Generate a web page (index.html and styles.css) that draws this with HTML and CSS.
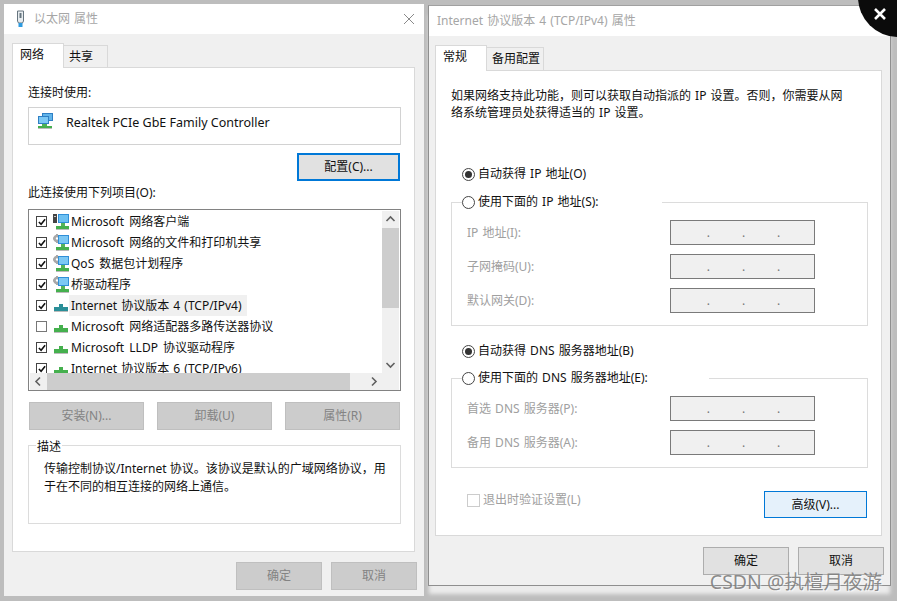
FILE: index.html
```html
<!DOCTYPE html>
<html lang="zh-CN">
  <head>
    <meta charset="UTF-8" />
    <title>以太网 属性</title>
    <link rel="stylesheet" href="styles.css">
  </head>
  <body>
    <svg class="defs" xmlns="http://www.w3.org/2000/svg">
      <symbol id="tick" viewBox="0 0 9 9">
        <path d="M1 4.500 3.500 7 8 1.500" fill="none" stroke="#111" stroke-width="1.800" />
      </symbol>
      <symbol id="client" viewBox="0 0 16 17">
        <path d="M0 1h4v9H0z" fill="#444" />
        <path d="M1 3h2v1H1z" fill="#ccc" />
        <path d="M5 1h11v9H5z" fill="#2f8fd8" />
        <path d="M6 2h9v7H6z" fill="#6cc0f2" />
        <path d="M8 10h4v3H8z" fill="#56b35a" />
        <path d="M3 13h13v3H3z" fill="#45b04e" />
        <path d="M3 16h13v1H3z" fill="#bbb" />
      </symbol>
      <symbol id="service" viewBox="0 0 16 17">
        <circle cx="4" cy="4.500" r="2.500" fill="none" stroke="#a8a8a8" stroke-width="2.600" />
        <path d="M3 0h2v2H3zM0 3.500h2v2H0zM3 7h2v2H3z" fill="#a8a8a8" />
        <path d="M5 1h11v9H5z" fill="#2f8fd8" />
        <path d="M6 2h9v7H6z" fill="#7cc8f4" />
        <path d="M8 10h4v3H8z" fill="#56b35a" />
        <path d="M3 13h13v3H3z" fill="#45b04e" />
        <path d="M3 16h13v1H3z" fill="#bbb" />
      </symbol>
      <symbol id="protocol" viewBox="0 0 14 8">
        <path d="M5 0h4v3H5z" fill="currentColor" />
        <path d="M0 3h14v4H0z" fill="currentColor" />
        <path d="M0 7h14v1H0z" fill="#bbb" />
      </symbol>
      <symbol id="adapter" viewBox="0 0 16 16">
        <path d="M5 0h11v8H5z" fill="#2f7fc4" />
        <path d="M6 1h9v6H6z" fill="#62b5ea" />
        <path d="M1 3h11v8H1z" fill="#2f7fc4" />
        <path d="M2 4h9v6H2z" fill="#7cc8f4" />
        <path d="M5 11h5v2H5z" fill="#4fb257" />
        <path d="M1 13h14v2H1z" fill="#45b04e" />
        <path d="M1 15h14v1H1z" fill="#bbb" />
      </symbol>
      <symbol id="plug" viewBox="0 0 9 18">
        <path d="M1.500 1h6v10l-1 2h-4l-1-2z" fill="#e8edf0" stroke="#66757f" />
        <path d="M3.500 3h2v5h-2z" fill="#66757f" />
        <path d="M2.500 13h4v4h-4z" fill="#2e9be0" />
      </symbol>
    </svg>

    <div class="desktop">
      <section class="window window-left">
        <header class="titlebar">
          <svg class="title-icon"><use href="#plug" /></svg>
          <span>以太网 属性</span>
          <svg class="title-close" viewBox="0 0 10 10">
            <path d="M0 0 10 10M10 0 0 10" stroke="#8a8a8a" fill="none" />
          </svg>
        </header>
        <div class="window-body">
          <div class="tabs">
            <span class="tab tab-active tab-wide">网络</span>
            <span class="tab tab-share">共享</span>
          </div>
          <div class="panel panel-left">
            <div class="text-line label-first">连接时使用:</div>
            <div class="adapter">
              <svg class="adapter-icon"><use href="#adapter" /></svg>
              <span class="adapter-name">Realtek PCIe GbE Family Controller</span>
            </div>
            <button class="btn btn-focus">配置(C)...</button>
            <div class="text-line label-items">此连接使用下列项目(O):</div>
            <div class="listbox">
              <ul class="list">
                <li class="row"><i class="check"><svg><use href="#tick" /></svg></i><svg class="row-icon"><use href="#client" /></svg><span class="row-text">Microsoft 网络客户端</span></li>
                <li class="row"><i class="check"><svg><use href="#tick" /></svg></i><svg class="row-icon"><use href="#service" /></svg><span class="row-text">Microsoft 网络的文件和打印机共享</span></li>
                <li class="row"><i class="check"><svg><use href="#tick" /></svg></i><svg class="row-icon"><use href="#service" /></svg><span class="row-text">QoS 数据包计划程序</span></li>
                <li class="row"><i class="check"><svg><use href="#tick" /></svg></i><svg class="row-icon"><use href="#service" /></svg><span class="row-text">桥驱动程序</span></li>
                <li class="row"><i class="check"><svg><use href="#tick" /></svg></i><svg class="row-icon proto teal"><use href="#protocol" /></svg><span class="row-text row-hover row-tight">Internet 协议版本 4 (TCP/IPv4)</span></li>
                <li class="row"><i class="check check-off"></i><svg class="row-icon proto"><use href="#protocol" /></svg><span class="row-text">Microsoft 网络适配器多路传送器协议</span></li>
                <li class="row"><i class="check"><svg><use href="#tick" /></svg></i><svg class="row-icon proto"><use href="#protocol" /></svg><span class="row-text">Microsoft LLDP 协议驱动程序</span></li>
                <li class="row"><i class="check"><svg><use href="#tick" /></svg></i><svg class="row-icon proto"><use href="#protocol" /></svg><span class="row-text row-tight">Internet 协议版本 6 (TCP/IPv6)</span></li>
              </ul>
              <div class="vbar">
                <svg class="arrow" viewBox="0 0 17 17"><path d="M4.500 10 8.500 6l4 4" /></svg>
                <div class="vtrack"><div class="vthumb"></div></div>
                <svg class="arrow" viewBox="0 0 17 17"><path d="M4.500 7 8.500 11l4-4" /></svg>
              </div>
              <div class="hbar">
                <svg class="arrow" viewBox="0 0 17 17"><path d="M10 4.500 6 8.500l4 4" /></svg>
                <div class="htrack"><div class="hthumb"></div></div>
                <svg class="arrow" viewBox="0 0 17 17"><path d="M7 4.500 11 8.500l-4 4" /></svg>
              </div>
              <div class="corner"></div>
            </div>
            <div class="action-row">
              <button class="btn btn-off">安装(N)...</button>
              <button class="btn btn-off">卸载(U)</button>
              <button class="btn btn-off">属性(R)</button>
            </div>
            <fieldset class="group group-desc">
              <legend class="desc-legend">描述</legend>
              <p class="desc-text">传输控制协议/Internet 协议。该协议是默认的广域网络协议，用<br>于在不同的相互连接的网络上通信。</p>
            </fieldset>
          </div>
          <div class="dialog-buttons">
            <button class="btn btn-off btn-dialog">确定</button>
            <button class="btn btn-off btn-dialog">取消</button>
          </div>
        </div>
      </section>

      <section class="window window-right">
        <header class="titlebar titlebar-right">
          <span>Internet 协议版本 4 (TCP/IPv4) 属性</span>
        </header>
        <div class="window-body body-right">
          <div class="tabs tabs-right">
            <span class="tab tab-active tab-wide">常规</span>
            <span class="tab tab-alt">备用配置</span>
          </div>
          <div class="panel panel-right">
            <p class="intro">如果网络支持此功能，则可以获取自动指派的 IP 设置。否则，你需要从网<br>络系统管理员处获得适当的 IP 设置。</p>
            <div class="radio-line radio-first"><i class="radio radio-on"></i>自动获得 IP 地址(O)</div>
            <fieldset class="group group-ip">
              <legend class="radio-legend legend-ip"><span class="radio-line"><i class="radio"></i>使用下面的 IP 地址(S):</span></legend>
              <div class="fields">
                <span class="field-label">IP 地址(I):</span>
                <div class="ip-box"><b>.</b><b>.</b><b>.</b></div>
                <span class="field-label">子网掩码(U):</span>
                <div class="ip-box"><b>.</b><b>.</b><b>.</b></div>
                <span class="field-label">默认网关(D):</span>
                <div class="ip-box"><b>.</b><b>.</b><b>.</b></div>
              </div>
            </fieldset>
            <div class="radio-line radio-dns"><i class="radio radio-on"></i>自动获得 DNS 服务器地址(B)</div>
            <fieldset class="group group-dns">
              <legend class="radio-legend legend-dns"><span class="radio-line"><i class="radio"></i>使用下面的 DNS 服务器地址(E):</span></legend>
              <div class="fields">
                <span class="field-label">首选 DNS 服务器(P):</span>
                <div class="ip-box"><b>.</b><b>.</b><b>.</b></div>
                <span class="field-label">备用 DNS 服务器(A):</span>
                <div class="ip-box"><b>.</b><b>.</b><b>.</b></div>
              </div>
            </fieldset>
            <div class="panel-foot">
              <div class="validate"><i class="check-dim"></i>退出时验证设置(L)</div>
              <button class="btn btn-advanced">高级(V)...</button>
            </div>
          </div>
          <div class="dialog-buttons">
            <button class="btn btn-dialog">确定</button>
            <button class="btn btn-dialog">取消</button>
          </div>
        </div>
      </section>
    </div>

    <div class="viewer-close">
      <svg viewBox="0 0 12 12"><path d="M1 1 11 11M11 1 1 11" stroke="#fff" stroke-width="2.600" fill="none" /></svg>
    </div>
    <div class="watermark">CSDN @执檀月夜游</div>
  </body>
</html>
```

FILE: styles.css
```css
* {
  box-sizing: border-box;
}
html,
body {
  height: 601px;
  overflow: hidden;
}
body {
  margin: 0;
  position: relative;
  background-color: #bdbdbd;
  font-family: "Noto Sans", "Noto Sans CJK SC", sans-serif;
  font-size: 12px;
  line-height: 16px;
  word-spacing: 1px;
  color: #111;
}
.defs {
  display: none;
}
.desktop {
  display: flex;
  align-items: flex-start;
  gap: 4px;
  padding: 4px 0 0 4px;
}
.window {
  display: flex;
  flex-direction: column;
  background-color: #f0f0f0;
}
.window-left {
  width: 420px;
  height: 592px;
}
.window-right {
  width: 463px;
  height: 581px;
  margin-top: 1px;
  border: 1px solid #8f8f8f;
  border-top-color: #a0a0a0;
  box-shadow: 0 9px 4px -1px #ececec;
}
.titlebar {
  display: flex;
  align-items: center;
  height: 30px;
  flex: none;
  padding-left: 12px;
  background-color: #fff;
  color: #a6a6a6;
}
.titlebar-right {
  padding-left: 8px;
}
.title-icon {
  width: 9px;
  height: 18px;
  margin-right: 9px;
}
.title-close {
  width: 10px;
  height: 10px;
  margin-left: auto;
  margin-right: 10px;
}
.window-body {
  flex: 1;
  display: flex;
  flex-direction: column;
  padding: 9px 9px 0 8px;
}
.body-right {
  padding: 9px 8px 0 6px;
}
.tabs {
  display: flex;
  align-items: flex-start;
  height: 25px;
  margin-bottom: -1px;
  position: relative;
  z-index: 1;
}
.tabs-right {
  height: 26px;
}
.tab {
  height: 22px;
  margin-top: 2px;
  margin-left: -1px;
  padding-left: 5px;
  border: 1px solid #d9d9d9;
  border-bottom: none;
  background-color: #f0f0f0;
  line-height: 21px;
}
.tabs-right .tab {
  height: 23px;
}
.tab-active,
.tabs-right .tab-active {
  height: 100%;
  margin-top: 0;
  margin-left: 0;
  padding-left: 7px;
  background-color: #fff;
}
.tabs-right .tab-active {
  line-height: 22px;
}
.tab-wide {
  width: 52px;
}
.tab-share {
  width: 45px;
}
.tab-alt {
  width: 58px;
}
.panel {
  display: flex;
  flex-direction: column;
  border: 1px solid #d9d9d9;
  background-color: #fff;
  padding: 0 13px 0 15px;
}
.panel-left {
  height: 485px;
}
.panel-right {
  height: 466px;
}
.text-line {
  height: 16px;
}
.label-first {
  margin-top: 17px;
}
.adapter {
  display: flex;
  align-items: flex-start;
  height: 38px;
  margin-top: 6px;
  padding: 5px 0 0 8px;
  border: 1px solid #d2d2d2;
  font-size: 12.500px;
  word-spacing: 0;
}
.adapter-icon {
  width: 16px;
  height: 16px;
  margin-right: 13px;
}
.adapter-name {
  margin-top: 2px;
}
.btn {
  display: block;
  height: 28px;
  padding: 0;
  border: 1px solid #adadad;
  background-color: #e1e1e1;
  font: inherit;
  color: #111;
}
.btn-focus {
  align-self: flex-end;
  width: 103px;
  margin-top: 8px;
  margin-right: 1px;
  border: 2px solid #0078d7;
}
.btn-off {
  background-color: #cccccc;
  border-color: #bfbfbf;
  color: #838383;
}
.label-items {
  margin-top: 4px;
}
.listbox {
  display: grid;
  grid-template-columns: 1fr 17px;
  grid-template-rows: 162px 17px;
  height: 182px;
  margin-top: 8px;
  padding: 1px;
  border: 1px solid #828282;
}
.list {
  margin: 0;
  padding: 0;
  list-style: none;
  overflow: hidden;
}
.row {
  display: flex;
  align-items: center;
  height: 21px;
  padding-left: 6px;
  white-space: nowrap;
}
.check,
.check-dim {
  display: block;
  flex: none;
  width: 11px;
  height: 11px;
  border: 1px solid #444;
  margin-right: 6px;
  padding: 0.500px;
}
.check svg {
  display: block;
  width: 8px;
  height: 8px;
}
.check-off {
  border-color: #777;
}
.row-icon {
  flex: none;
  width: 16px;
  height: 17px;
  color: #45b04e;
  margin-right: 2px;
}
.proto {
  width: 14px;
  height: 8px;
  margin: 5px 3px 0 1px;
}
.teal {
  color: #2a8f98;
}
.row-text {
  display: block;
  height: 21px;
  line-height: 22px;
  padding: 0 2px 0 0;
  word-spacing: 2px;
}
.row-tight {
  word-spacing: 1px;
}
.row-hover {
  background-color: #f0f0f0;
  margin-left: -2px;
  padding: 0 5px 0 2px;
}
.vbar,
.htrack,
.hbar {
  background-color: #f0f0f0;
}
.vbar {
  display: flex;
  flex-direction: column;
}
.vtrack {
  flex: 1;
}
.vthumb {
  height: 80px;
  background-color: #cdcdcd;
}
.hbar {
  display: flex;
}
.htrack {
  flex: 1;
}
.hthumb {
  width: 303px;
  height: 17px;
  background-color: #cdcdcd;
}
.arrow {
  flex: none;
  display: block;
  width: 17px;
  height: 17px;
}
.arrow path {
  fill: none;
  stroke: #606060;
  stroke-width: 1.600;
}
.corner {
  background-color: #f0f0f0;
}
.action-row {
  display: flex;
  justify-content: space-between;
  margin: 11px 1px 0;
}
.action-row .btn {
  width: 115px;
}
.group {
  margin: 0;
  padding: 0;
  border: 1px solid #dcdcdc;
}
.group-desc {
  height: 87px;
  margin-top: 7px;
  word-spacing: 0;
}
.desc-legend {
  margin-left: 7px;
  padding: 0 1px;
  height: 16px;
  line-height: 20px;
}
.desc-text {
  margin: 7px 0 0 15px;
  line-height: 18px;
}
.dialog-buttons {
  display: flex;
  justify-content: flex-end;
  gap: 9px;
  margin-top: 10px;
  margin-right: -2px;
}
.body-right .dialog-buttons {
  margin-top: 11px;
}
.btn-dialog {
  width: 86px;
}
.intro {
  margin: 16px 0 0;
  line-height: 17px;
}
.radio-line {
  display: flex;
  align-items: center;
  height: 16px;
  white-space: nowrap;
}
.radio {
  flex: none;
  display: flex;
  align-items: center;
  justify-content: center;
  width: 13px;
  height: 13px;
  margin-right: 3px;
  border: 1px solid #444;
  border-radius: 50%;
  background-color: #fff;
}
.radio-on::after {
  content: "";
  width: 7px;
  height: 7px;
  border-radius: 50%;
  background-color: #333;
}
.radio-first,
.radio-dns {
  margin-left: 11px;
}
.radio-first {
  margin-top: 45px;
}
.radio-legend {
  margin-left: 10px;
  padding: 0;
  height: 16px;
}
.legend-ip {
  width: 200px;
}
.legend-dns {
  width: 247px;
}
.group-ip {
  height: 132px;
  margin-top: 12px;
}
.radio-dns {
  margin-top: 17px;
}
.group-dns {
  height: 98px;
  margin-top: 11px;
}
.fields {
  display: grid;
  grid-template-columns: 203px 145px;
  grid-auto-rows: 25px;
  row-gap: 9px;
  align-items: center;
  padding: 10px 0 0 15px;
}
.field-label {
  color: #a0a0a0;
}
.ip-box {
  display: flex;
  justify-content: center;
  gap: 32px;
  height: 25px;
  padding-left: 2px;
  border: 1px solid #7a7a7a;
  background-color: #f0f0f0;
}
.ip-box b {
  font-weight: normal;
  color: #777;
  line-height: 24px;
}
.panel-foot {
  display: flex;
  justify-content: space-between;
  align-items: flex-start;
  margin-top: 23px;
}
.validate {
  display: flex;
  align-items: center;
  height: 16px;
  margin: 1px 0 0 16px;
  color: #a0a0a0;
}
.check-dim {
  width: 13px;
  height: 13px;
  margin-right: 3px;
  border-color: #ccc;
}
.btn-advanced {
  width: 103px;
  height: 27px;
  margin-right: 1px;
  background-color: #e5f1fb;
  border-color: #0078d7;
}
.viewer-close {
  position: absolute;
  top: -43px;
  right: -41px;
  display: flex;
  align-items: flex-end;
  justify-content: flex-start;
  width: 80px;
  height: 80px;
  padding: 0 0 17px 16px;
  border-radius: 50%;
  background-color: #0b0b0b;
}
.viewer-close svg {
  display: block;
  width: 12px;
  height: 12px;
}
.watermark {
  position: absolute;
  right: 15px;
  bottom: 8px;
  font-size: 19.500px;
  line-height: 22px;
  word-spacing: 0;
  color: rgba(120, 120, 120, 0.85);
  text-shadow: 1px 1px 1px rgba(255, 255, 255, 0.6);
  white-space: nowrap;
}
```
